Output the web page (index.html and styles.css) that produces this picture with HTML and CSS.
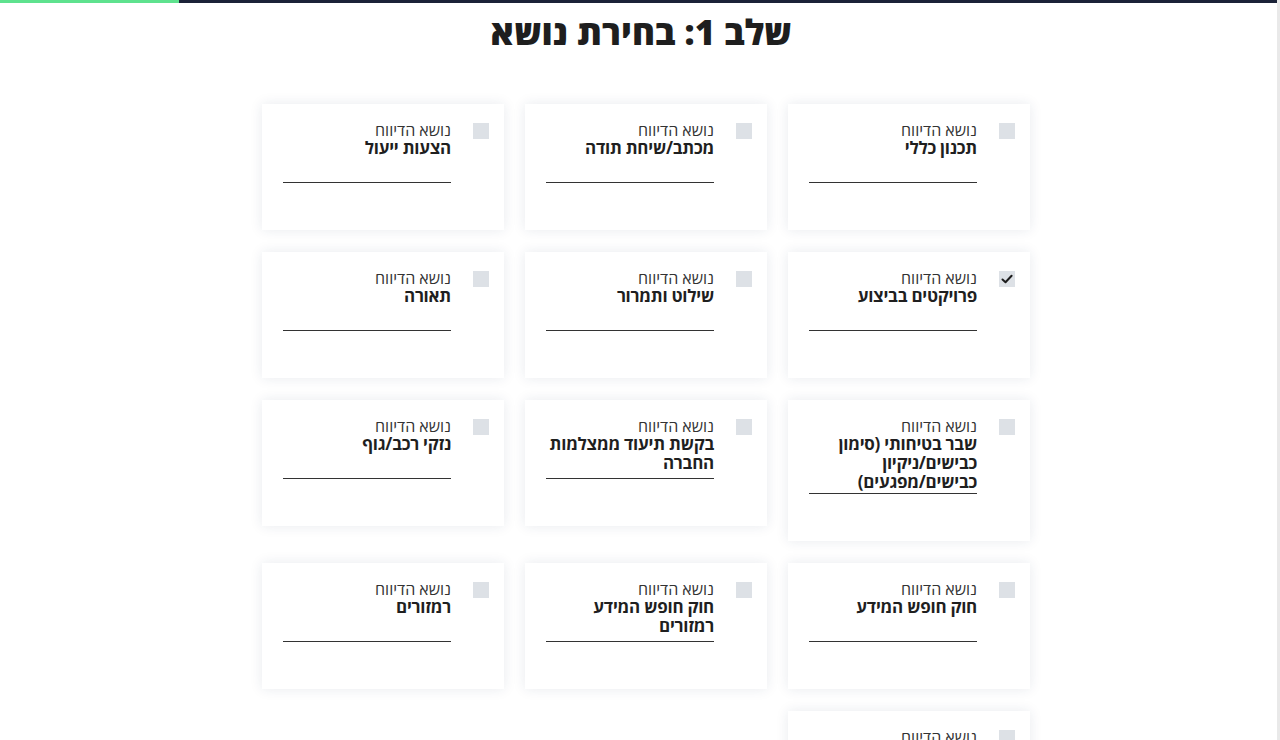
FILE: index.html
```html
<!DOCTYPE html>
<html lang="he" dir="rtl">
<head>
<meta charset="utf-8">
<title>שלב 1: בחירת נושא</title>
<link rel="stylesheet" href="styles.css">
</head>
<body>
<div class="page">
  <div class="progress"><div class="progress-fill" style="width:14%"></div></div>
  <h1 class="heading">שלב 1: בחירת נושא</h1>
  <div class="grid-wrap">
    <div class="grid">
      <div class="card"><span class="box"></span><div class="text"><div class="label">נושא הדיווח</div><div class="title">תכנון כללי</div></div></div>
      <div class="card"><span class="box"></span><div class="text"><div class="label">נושא הדיווח</div><div class="title">מכתב/שיחת תודה</div></div></div>
      <div class="card"><span class="box"></span><div class="text"><div class="label">נושא הדיווח</div><div class="title">הצעות ייעול</div></div></div>

      <div class="card"><span class="box checked"><svg viewBox="0 0 16 16" width="16" height="16"><path d="M3.5 8.5 L6.5 11.2 L12.6 4.8" fill="none" stroke="#1c1c1c" stroke-width="2" stroke-linecap="round" stroke-linejoin="round"/></svg></span><div class="text"><div class="label">נושא הדיווח</div><div class="title">פרויקטים בביצוע</div></div></div>
      <div class="card"><span class="box"></span><div class="text"><div class="label">נושא הדיווח</div><div class="title">שילוט ותמרור</div></div></div>
      <div class="card"><span class="box"></span><div class="text"><div class="label">נושא הדיווח</div><div class="title">תאורה</div></div></div>

      <div class="card"><span class="box"></span><div class="text"><div class="label">נושא הדיווח</div><div class="title">שבר בטיחותי (סימון כבישים/ניקיון כבישים/מפגעים)</div></div></div>
      <div class="card"><span class="box"></span><div class="text"><div class="label">נושא הדיווח</div><div class="title">בקשת תיעוד ממצלמות החברה</div></div></div>
      <div class="card"><span class="box"></span><div class="text"><div class="label">נושא הדיווח</div><div class="title">נזקי רכב/גוף</div></div></div>

      <div class="card"><span class="box"></span><div class="text"><div class="label">נושא הדיווח</div><div class="title">חוק חופש המידע</div></div></div>
      <div class="card"><span class="box"></span><div class="text"><div class="label">נושא הדיווח</div><div class="title">חוק חופש המידע רמזורים</div></div></div>
      <div class="card"><span class="box"></span><div class="text"><div class="label">נושא הדיווח</div><div class="title">רמזורים</div></div></div>

      <div class="card"><span class="box"></span><div class="text"><div class="label">נושא הדיווח</div><div class="title">אחר</div></div></div>
    </div>
  </div>
</div>
</body>
</html>
```
FILE: styles.css
```css
html, body {
  margin: 0;
  padding: 0;
  background: #ffffff;
}
body {
  font-family: "Open Sans", "DejaVu Sans", "Liberation Sans", sans-serif;
  color: #222;
  overflow: hidden;
}
.page {
  width: 1277px;
  min-height: 740px;
  border-right: 3px solid #e9e9e9;
  box-sizing: content-box;
}
.progress {
  direction: ltr;
  height: 3px;
  background: #1b2238;
  display: flex;
}
.progress-fill {
  height: 3px;
  background: #5ee28e;
}
.heading {
  margin: 5px 0 0 0;
  padding-left: 5px;
  text-align: center;
  font-size: 35px;
  line-height: 48px;
  font-weight: 800;
  color: #1e1e1e;
  letter-spacing: 0;
}
.grid-wrap {
  padding-left: 15px;
  padding-top: 48px;
  display: flex;
  justify-content: center;
}
.grid {
  display: grid;
  grid-template-columns: repeat(3, 242px);
  column-gap: 21px;
  row-gap: 22px;
  align-items: start;
}
.card {
  background: #fff;
  box-shadow: 0 0 12px rgba(30, 50, 90, 0.10);
  padding: 18px 15px 47px 21px;
  display: flex;
  align-items: flex-start;
  gap: 22px;
  box-sizing: border-box;
  width: 242px;
}
.box {
  flex: 0 0 16px;
  width: 16px;
  height: 16px;
  margin-top: 1px;
  background: #dde1e6;
  display: block;
}
.box svg {
  display: block;
}
.text {
  flex: 1;
  min-height: 58px;
  border-bottom: 1px solid #333;
  padding-bottom: 2px;
}
.label {
  font-size: 16px;
  line-height: 17px;
  font-weight: 400;
  color: #333;
}
.title {
  font-size: 17px;
  line-height: 19px;
  margin-top: -1px;
  font-weight: 700;
  letter-spacing: -0.25px;
  color: #1f1f1f;
}
```
